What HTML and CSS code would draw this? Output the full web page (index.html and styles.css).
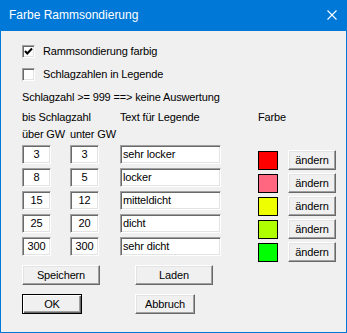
FILE: index.html
```html
<!DOCTYPE html>
<html>
<head>
<meta charset="utf-8">
<link rel="stylesheet" href="styles.css">
</head>
<body>
<div class="window">
  <div class="titlebar">
    <span class="title">Farbe Rammsondierung</span>
    <svg class="close" width="10" height="10" viewBox="0 0 10 10"><path d="M0.5 0.5 L9.5 9.5 M9.5 0.5 L0.5 9.5" stroke="#fff" stroke-width="1.1"/></svg>
  </div>
  <div class="content">
    <label class="check"><span class="box"><svg width="9" height="9" viewBox="0 0 9 9"><path d="M1 4 L3.3 6.5 L8 1.5" stroke="#000" stroke-width="2" fill="none"/></svg></span>Rammsondierung farbig</label>
    <label class="check"><span class="box"></span>Schlagzahlen in Legende</label>
    <div class="note">Schlagzahl &gt;= 999 ==&gt; keine Auswertung</div>
    <div class="table">
      <div class="left">
        <div class="hdr">
          <div class="h1">bis Schlagzahl</div>
          <div class="h2">Text für Legende</div>
        </div>
        <div class="hdr2">
          <div class="c1">über GW</div>
          <div class="c2">unter GW</div>
        </div>
        <div class="row"><div class="in num">3</div><div class="in num">3</div><div class="in txt">sehr locker</div></div>
        <div class="row"><div class="in num">8</div><div class="in num">5</div><div class="in txt">locker</div></div>
        <div class="row"><div class="in num">15</div><div class="in num">12</div><div class="in txt">mitteldicht</div></div>
        <div class="row"><div class="in num">25</div><div class="in num">20</div><div class="in txt">dicht</div></div>
        <div class="row"><div class="in num">300</div><div class="in num">300</div><div class="in txt">sehr dicht</div></div>
      </div>
      <div class="right">
        <div class="hfarbe">Farbe</div>
        <div class="crow"><span class="sw red"></span><span class="btn small">ändern</span></div>
        <div class="crow"><span class="sw pink"></span><span class="btn small">ändern</span></div>
        <div class="crow"><span class="sw yellow"></span><span class="btn small">ändern</span></div>
        <div class="crow"><span class="sw lime"></span><span class="btn small">ändern</span></div>
        <div class="crow"><span class="sw green"></span><span class="btn small">ändern</span></div>
      </div>
    </div>
    <div class="brow first"><span class="btn wide">Speichern</span><span class="btn wide">Laden</span></div>
    <div class="brow"><span class="btn mid def">OK</span><span class="btn mid">Abbruch</span></div>
  </div>
</div>
</body>
</html>
```
FILE: styles.css
```css
html, body { margin: 0; padding: 0; background: #f0f0f0; }
body { font-family: "Liberation Sans", Arial, sans-serif; font-size: 11px; letter-spacing: -0.15px; color: #000; }
.window { width: 347px; height: 333px; box-sizing: border-box; border: 1px solid #0078d7; border-top: none; background: #f0f0f0; }
.titlebar { height: 31px; background: #0078d7; color: #fff; display: flex; align-items: center; justify-content: space-between; padding: 0 10px 0 9px; margin: 0 -1px; }
.title { font-size: 12px; letter-spacing: 0; font-family: "Liberation Sans", sans-serif; padding-bottom: 1px; }
.close { display: block; margin-top: -1px; }
.content { padding: 14px 0 0 21px; }
.check { display: flex; align-items: center; height: 13px; line-height: 13px; margin-bottom: 10px; }
.box { width: 13px; height: 13px; box-sizing: border-box; background: #fff; border-style: solid; border-width: 1px; border-color: #a0a0a0 #fff #fff #a0a0a0; box-shadow: inset 1px 1px 0 #696969, inset -1px -1px 0 #e3e3e3; margin-right: 8px; display: flex; align-items: center; justify-content: center; }
.box svg { display: block; }
.note { height: 13px; line-height: 13px; }
.table { display: flex; margin-top: 7px; }
.left { width: 199px; }
.hdr, .hdr2 { display: flex; height: 13px; line-height: 13px; }
.hdr { margin-bottom: 4px; }
.hdr2 { margin-bottom: 4px; }
.h1 { width: 98px; }
.c1 { width: 48px; }
.row { display: flex; height: 19px; margin-bottom: 4px; }
.in { box-sizing: border-box; height: 19px; background: #fff; border-style: solid; border-width: 1px; border-color: #a0a0a0 #fff #fff #a0a0a0; box-shadow: inset 1px 1px 0 #696969, inset -1px -1px 0 #e3e3e3; line-height: 17px; padding: 0 2px; }
.num { width: 29px; text-align: center; margin-right: 19px; }
.txt { width: 101px; margin-left: 2px; text-align: left; }
.right { margin-left: 37px; }
.hfarbe { height: 13px; line-height: 13px; margin-bottom: 26px; }
.crow { display: flex; align-items: center; height: 20px; margin-bottom: 3px; }
.crow:last-child { margin-bottom: 0; }
.sw { width: 20px; height: 19px; box-sizing: border-box; border: 1px solid #000; margin-right: 10px; }
.red { background: #ff0000; }
.pink { background: #ff6680; }
.yellow { background: #eeff00; }
.lime { background: #b0ff00; }
.green { background: #00ff00; }
.btn { box-sizing: border-box; height: 20px; line-height: 18px; text-align: center; background: #f0f0f0; border-style: solid; border-width: 1px; border-color: #fff #696969 #696969 #fff; box-shadow: inset -1px -1px 0 #a0a0a0, inset 1px 1px 0 #e3e3e3; display: inline-block; }
.small { width: 48px; }
.wide { width: 78px; margin-right: 35px; }
.mid { width: 60px; margin-right: 53px; }
.def { border: 1px solid #000; box-shadow: inset 1px 1px 0 #fff, inset -1px -1px 0 #696969, inset -2px -2px 0 #a0a0a0; }
.brow { display: flex; margin-top: 9px; }
.brow.first { margin-top: 3px; }
```
